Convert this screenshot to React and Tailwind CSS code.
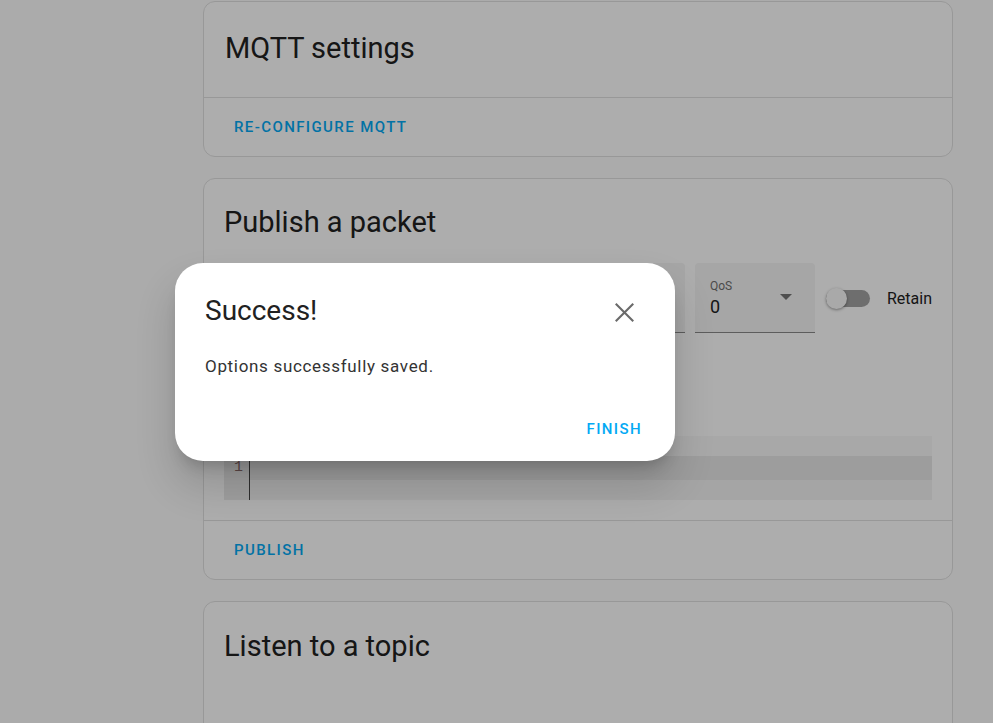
export default function App() {
  const font = { fontFamily: "Roboto, 'Noto Sans', sans-serif" };
  return (
    <div className="relative h-[723px] w-[993px] overflow-hidden bg-[#fdfdfd]" style={font}>
      <div className="flex flex-col gap-[21px] pl-[203px] pt-px">
        {/* Card 1 */}
        <div className="w-[750px] rounded-xl border border-[#e0e0e0] bg-white">
          <div className="h-[95px] px-[21px] pt-[30px] text-[29px] leading-[32px] text-[#212121]">MQTT settings</div>
          <div className="flex h-[59px] items-center border-t border-[#e0e0e0] px-[30px]">
            <span className="text-[15px] font-medium uppercase tracking-[1.4px] text-[#03a9f4]">Re-configure MQTT</span>
          </div>
        </div>
        {/* Card 2 */}
        <div className="w-[750px] rounded-xl border border-[#e0e0e0] bg-white">
          <div className="h-[84px] px-[20px] pt-[27px] text-[29px] leading-[32px] text-[#212121]">Publish a packet</div>
          <div className="flex items-center px-[20px]">
            <div className="h-[70px] flex-1 rounded-t border-b border-[#8a8a8a] bg-[#f5f5f5]"></div>
            <div className="relative ml-[10px] h-[70px] w-[120px] rounded-t border-b border-[#8a8a8a] bg-[#f5f5f5] px-[15px]">
              <div className="pt-[16px] text-[12px] leading-[14px] text-[#6f6f6f]">QoS</div>
              <div className="text-[18px] leading-[28px] text-[#212121]">0</div>
              <svg className="absolute right-[22px] top-[30px]" width="14" height="8" viewBox="0 0 14 8">
                <path d="M1 1h12L7 7z" fill="#757575" />
              </svg>
            </div>
            <div className="ml-[11px] flex items-center">
              <div className="relative h-[17px] w-[44px] rounded-full bg-[#a2a2a2]">
                <div className="absolute left-0 top-[-2px] h-[21px] w-[21px] rounded-full bg-[#fafafa] shadow-[0_1px_3px_rgba(0,0,0,0.4)]"></div>
              </div>
              <span className="ml-[17px] pt-[1px] text-[16px] text-[#212121]">Retain</span>
            </div>
          </div>
          <div className="h-[103px]"></div>
          <div className="mx-[20px] h-[64px] bg-[#f8f8f8]">
            <div className="flex h-full flex-col">
              <div className="h-[20px]"></div>
              <div className="flex flex-1">
                <div className="w-[26px] border-r border-[#444] bg-[#ebebeb] pr-[6px] pt-[3px] text-right text-[15px] leading-[18px] text-[#8a6a6a]" style={{ fontFamily: "'Liberation Mono', monospace" }}>1</div>
                <div className="flex flex-1 flex-col">
                  <div className="h-[24px] bg-[#e8e8e8]"></div>
                  <div className="flex-1 bg-[#f3f3f3]"></div>
                </div>
              </div>
            </div>
          </div>
          <div className="h-[20px]"></div>
          <div className="flex h-[59px] items-center border-t border-[#e0e0e0] px-[30px]">
            <span className="text-[15px] font-medium uppercase tracking-[1.4px] text-[#03a9f4]">Publish</span>
          </div>
        </div>
        {/* Card 3 */}
        <div className="h-[200px] w-[750px] rounded-xl border border-[#e0e0e0] bg-white">
          <div className="px-[20px] pt-[28px] text-[29px] leading-[32px] text-[#212121]">Listen to a topic</div>
        </div>
      </div>

      {/* Scrim */}
      <div className="absolute inset-0 bg-[rgba(0,0,0,0.32)]"></div>

      {/* Dialog */}
      <div className="absolute left-[175px] top-[263px] h-[198px] w-[500px] rounded-[28px] bg-white shadow-[0_11px_15px_-7px_rgba(0,0,0,0.2),0_24px_38px_3px_rgba(0,0,0,0.14)]">
        <div className="flex items-start justify-between pl-[30px] pr-[36px] pt-[32px]">
          <div className="text-[28px] leading-[32px] text-[#212121]">Success!</div>
          <svg className="mt-[3px]" width="29" height="29" viewBox="0 0 29 29">
            <path d="M6.5 6.5L22.5 22.5M22.5 6.5L6.5 22.5" stroke="#6a6a6a" strokeWidth="2.1" strokeLinecap="square" fill="none" />
          </svg>
        </div>
        <div className="pl-[30px] pt-[27px] text-[17px] leading-[24px] tracking-[0.04em] text-[#333333]">Options successfully saved.</div>
        <div className="flex justify-end pr-[33px] pt-[40px]">
          <span className="text-[15px] font-medium uppercase tracking-[1.4px] text-[#03a9f4]">Finish</span>
        </div>
      </div>
    </div>
  );
}
